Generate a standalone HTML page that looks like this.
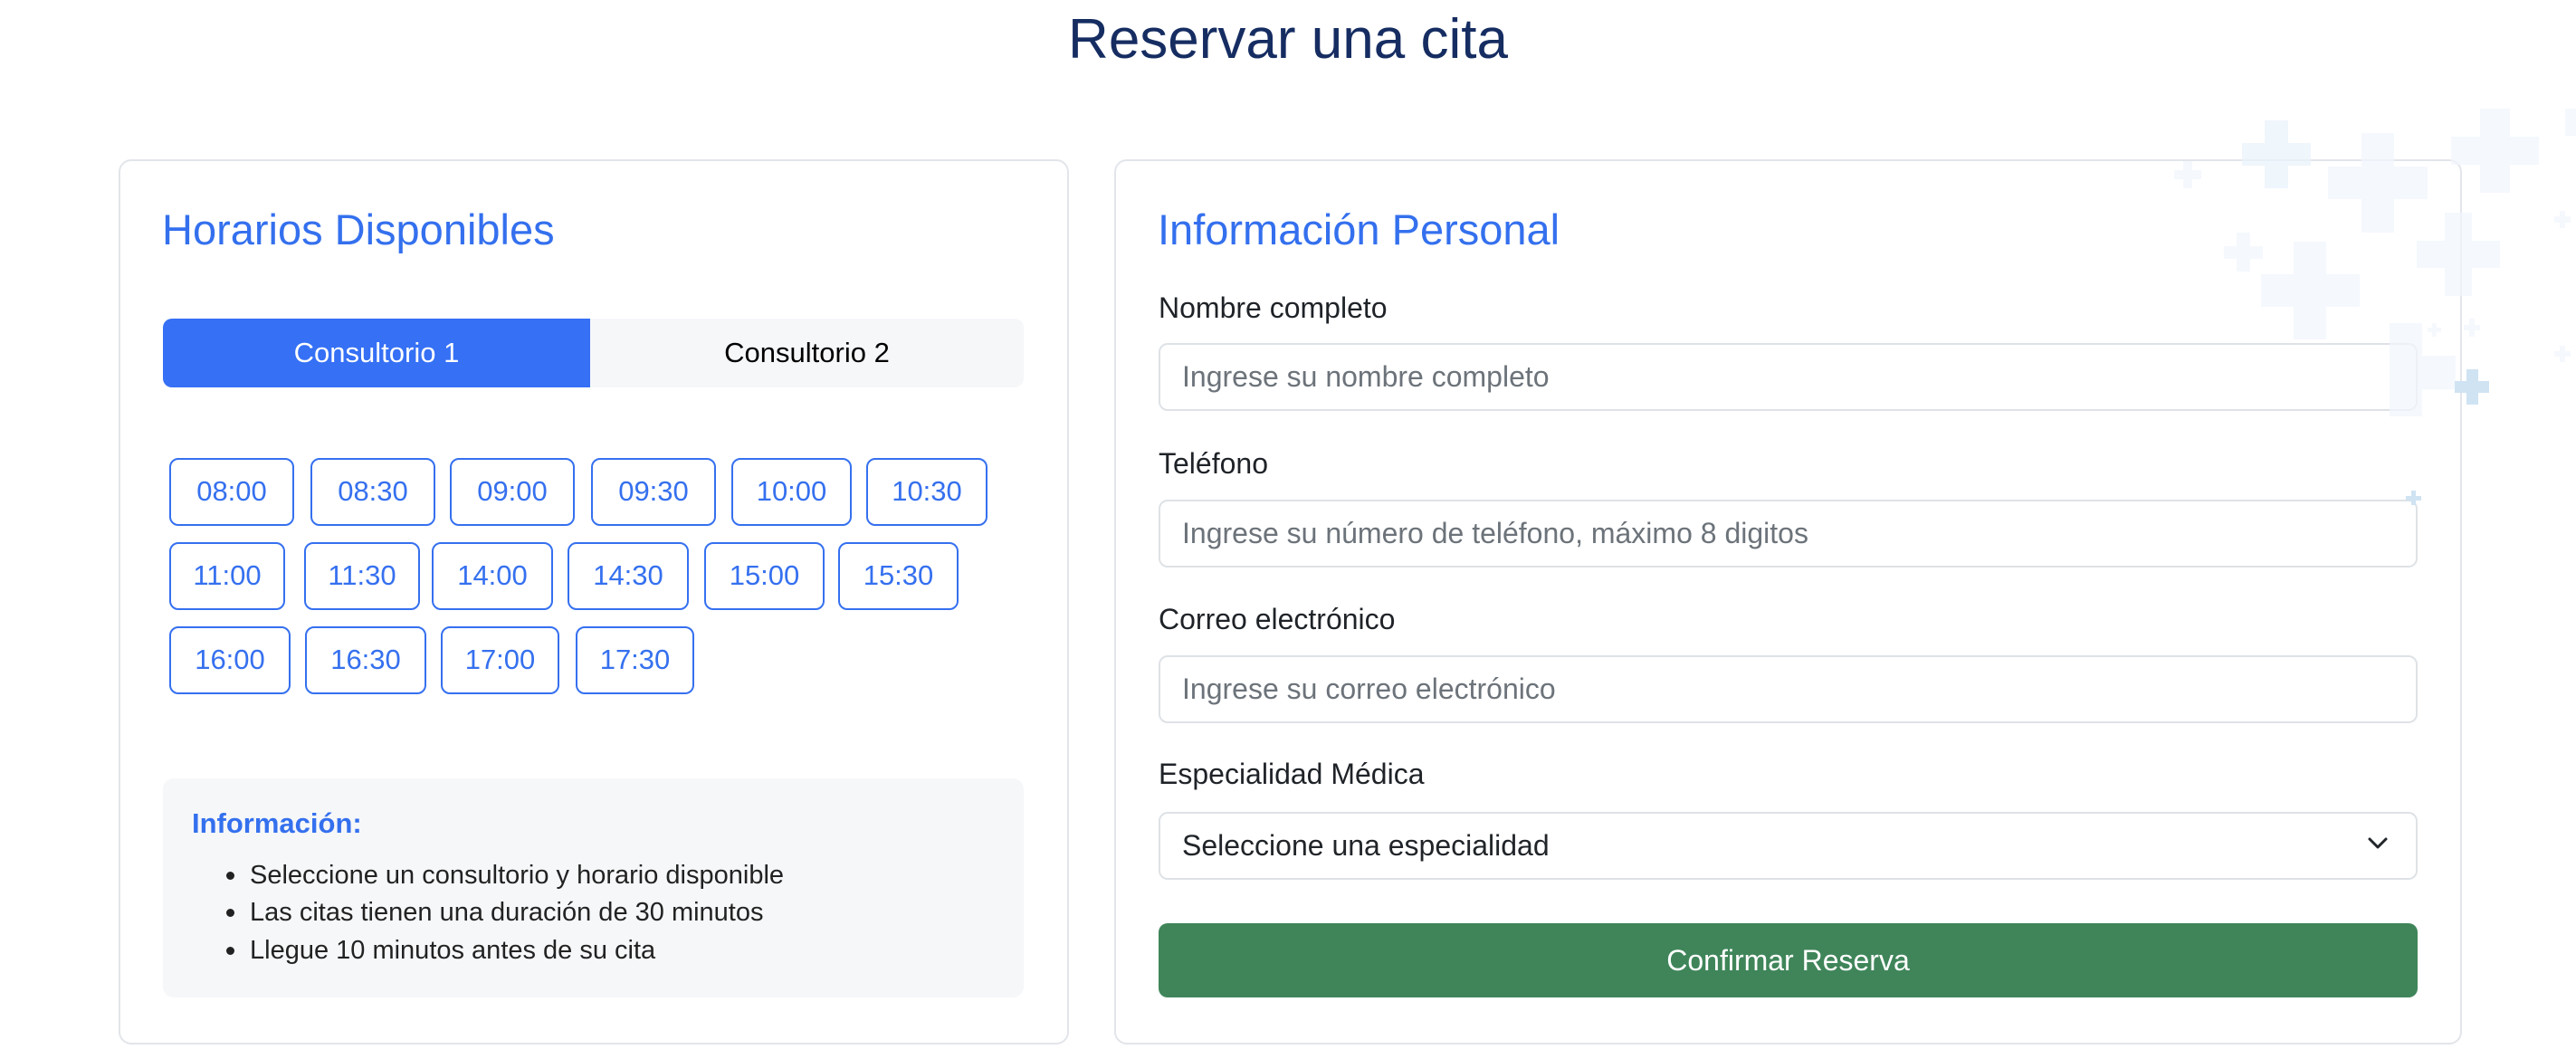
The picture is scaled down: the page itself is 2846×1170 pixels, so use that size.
<!DOCTYPE html>
<html><head><meta charset="utf-8"><style>
*{box-sizing:border-box;margin:0;padding:0}
body{width:2846px;height:1170px;background:#fff;font-family:"Liberation Sans",sans-serif;position:relative;overflow:hidden}
.a{position:absolute}
h1{position:absolute;left:0;width:2846px;top:6px;text-align:center;font-size:62px;font-weight:normal;color:#162d62;line-height:76px}
.card{position:absolute;border:2px solid #e2e5ea;border-radius:14px;background:#fff}
.h2{position:absolute;font-size:47px;color:#3470ee;line-height:54px}
.tab{position:absolute;top:352px;height:76px;font-size:31px;line-height:76px;text-align:center}
.tb{position:absolute;height:75px;border:2.5px solid #3570ef;border-radius:10px;color:#3570ef;font-size:31px;line-height:70px;text-align:center}
.lbl{position:absolute;left:1280px;font-size:32px;color:#1f2328;line-height:40px}
.inp{position:absolute;left:1280px;width:1391px;height:75px;border:2.5px solid #dee2e6;border-radius:10px;background:#fff;font-size:32px;line-height:70px;padding-left:24px;color:#6c737a}
.li{position:absolute;left:250px;font-size:29px;color:#222;line-height:36px}
.li:before{content:"";position:absolute;left:0;top:14px;width:9px;height:9px;border-radius:50%;background:#222}
.li span{margin-left:26px}
</style></head><body>
<h1>Reservar una cita</h1>

<div class="card" style="left:131px;top:176px;width:1050px;height:978px"></div>
<div class="h2" style="left:179px;top:227px">Horarios Disponibles</div>
<div class="a" style="left:180px;top:352px;width:951px;height:76px;background:#f6f7f9;border-radius:10px"></div>
<div class="tab" style="left:180px;width:472px;background:#3570f5;color:#fff;border-radius:10px 0 0 10px">Consultorio 1</div>
<div class="tab" style="left:652px;width:479px;color:#000">Consultorio 2</div>

<div class="tb" style="left:187px;top:506px;width:138px">08:00</div>
<div class="tb" style="left:343px;top:506px;width:138px">08:30</div>
<div class="tb" style="left:497px;top:506px;width:138px">09:00</div>
<div class="tb" style="left:653px;top:506px;width:138px">09:30</div>
<div class="tb" style="left:808px;top:506px;width:133px">10:00</div>
<div class="tb" style="left:957px;top:506px;width:134px">10:30</div>
<div class="tb" style="left:187px;top:599px;width:128px">11:00</div>
<div class="tb" style="left:336px;top:599px;width:128px">11:30</div>
<div class="tb" style="left:477px;top:599px;width:134px">14:00</div>
<div class="tb" style="left:627px;top:599px;width:134px">14:30</div>
<div class="tb" style="left:778px;top:599px;width:133px">15:00</div>
<div class="tb" style="left:926px;top:599px;width:133px">15:30</div>
<div class="tb" style="left:187px;top:692px;width:134px">16:00</div>
<div class="tb" style="left:337px;top:692px;width:134px">16:30</div>
<div class="tb" style="left:487px;top:692px;width:131px">17:00</div>
<div class="tb" style="left:636px;top:692px;width:131px">17:30</div>

<div class="a" style="left:180px;top:860px;width:951px;height:242px;background:#f6f7f9;border-radius:12px"></div>
<div class="a" style="left:212px;top:890px;font-size:31px;font-weight:bold;color:#3470ee;line-height:40px">Información:</div>
<div class="li" style="top:949px"><span>Seleccione un consultorio y horario disponible</span></div>
<div class="li" style="top:990px"><span>Las citas tienen una duración de 30 minutos</span></div>
<div class="li" style="top:1032px"><span>Llegue 10 minutos antes de su cita</span></div>

<div class="card" style="left:1231px;top:176px;width:1489px;height:978px"></div>
<div class="h2" style="left:1279px;top:227px">Información Personal</div>
<div class="lbl" style="top:320px">Nombre completo</div>
<div class="inp" style="top:379px">Ingrese su nombre completo</div>
<div class="lbl" style="top:492px">Teléfono</div>
<div class="inp" style="top:552px">Ingrese su número de teléfono, máximo 8 digitos</div>
<div class="lbl" style="top:664px">Correo electrónico</div>
<div class="inp" style="top:724px">Ingrese su correo electrónico</div>
<div class="lbl" style="top:835px">Especialidad Médica</div>
<div class="inp" style="top:897px;color:#212529">Seleccione una especialidad</div>
<svg class="a" style="left:2615px;top:924px" width="24" height="16" viewBox="0 0 24 16"><path d="M3 3l9 9 9-9" fill="none" stroke="#212529" stroke-width="3" stroke-linecap="round" stroke-linejoin="round"/></svg>
<div class="a" style="left:1280px;top:1020px;width:1391px;height:82px;background:#3f8559;border-radius:10px;color:#fff;font-size:32px;line-height:82px;text-align:center">Confirmar Reserva</div>

<svg class="a" style="left:0;top:0;pointer-events:none" width="2846" height="1170">
<g fill="#eaf3fb" fill-opacity="0.75">
<path d="M2502 133h26v25h25v25h-25v25h-26v-25h-25v-25h25z"/>
</g>
<g fill="#f1f6fc" fill-opacity="0.75">
<path d="M2609 147h36v37h37v36h-37v37h-36v-37h-37v-36h37z"/>
<path d="M2740 120h33v31h32v31h-32v31h-33v-31h-32v-31h32z"/>
<path d="M2534 267h36v36h37v36h-37v36h-36v-36h-36v-36h36z"/>
<path d="M2701 235h30v31h31v30h-31v31h-30v-31h-31v-30h31z"/>
<path d="M2640 357h36v103h-36z"/>
<path d="M2676 393h37v37h-37z"/>
<path d="M2412 178h10v10h10v10h-10v10h-10v-10h-10v-10h10z"/>
<path d="M2471 257h15v15h14v14h-14v14h-15v-14h-14v-14h14z"/>
<path d="M2834 120h12v30h-12z"/>
<path d="M2828 233h6v6h6v7h-6v6h-6v-6h-6v-7h6z"/>
<path d="M2828 382h6v6h6v6h-6v6h-6v-6h-6v-6h6z"/>
<path d="M2687 357h5v5h5v5h-5v5h-5v-5h-5v-5h5z"/>
<path d="M2728 352h6v7h6v6h-6v7h-6v-7h-6v-6h6z"/>
</g>
<path fill="#cfe3f3" d="M2725 408h13v13h12v13h-12v13h-13v-13h-13v-13h13z"/>
<path fill="#cfe3f3" d="M2664 542h5v6h6v5h-6v5h-5v-5h-6v-5h6z"/>
</svg>
</body></html>
